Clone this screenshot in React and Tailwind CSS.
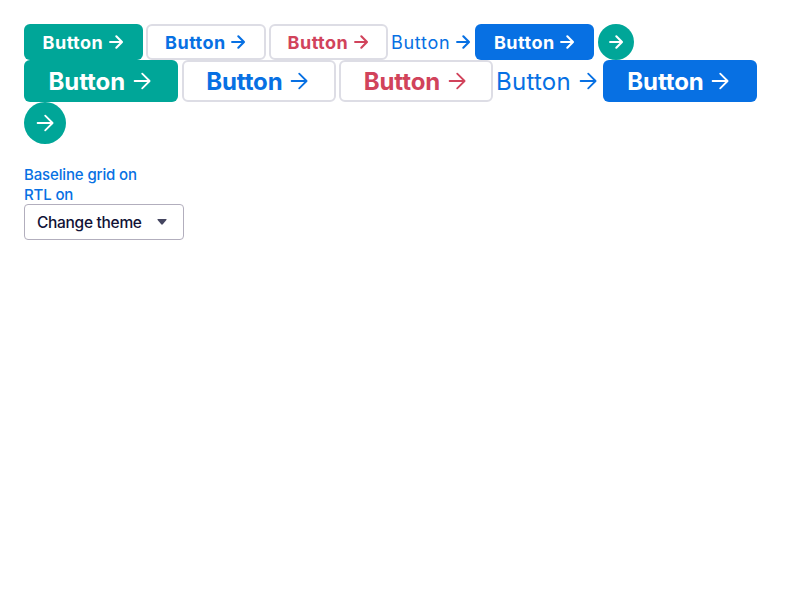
const themes = {
  primary: 'bg-[#00a698] text-white font-bold',
  secondary: 'border-2 border-[#dddde5] bg-white text-[#0770e3] font-bold',
  destructive: 'border-2 border-[#dddde5] bg-white text-[#d1435b] font-bold',
  link: 'text-[#0770e3]',
  featured: 'bg-[#0770e3] text-white font-bold',
};

const kinds = ['primary', 'secondary', 'destructive', 'link', 'featured'];

function Arrow({ large }) {
  return large ? (
    <svg className="size-6 shrink-0" viewBox="0 0 24 24" fill="none" stroke="currentColor" strokeWidth="1.8" strokeLinecap="round" strokeLinejoin="round">
      <path d="M4.6 12H19.4M12.2 4.6L19.6 12L12.2 19.4" />
    </svg>
  ) : (
    <svg className="size-[18px] shrink-0" viewBox="0 0 18 18" fill="none" stroke="currentColor" strokeWidth="2.1" strokeLinecap="round" strokeLinejoin="round">
      <path d="M3.1 9H14.9M9.3 3.3L15 9L9.3 14.7" />
    </svg>
  );
}

function Button({ kind, large }) {
  const isLink = kind === 'link';
  const size = large
    ? `h-[42px] rounded-md text-2xl ${isLink ? 'w-[102.6px]' : 'w-[154.2px]'}`
    : `h-9 rounded-md text-lg ${isLink ? 'w-[80.5px]' : 'w-[119.1px]'}`;
  const label = large
    ? `pt-0.5 ${isLink ? 'w-[77px] tracking-[0.25px]' : 'w-[78px] tracking-[-0.1px]'}`
    : `pt-px ${isLink ? 'w-[60.5px] tracking-[0.75px]' : 'w-[61px] tracking-[0.5px]'}`;
  return (
    <button className={`flex shrink-0 items-center justify-center ${size} ${themes[kind]}`}>
      <span className={`shrink-0 text-left whitespace-nowrap ${label}`}>Button</span>
      <span className="ml-[3px]"><Arrow large={large} /></span>
    </button>
  );
}

function RoundButton({ large }) {
  return (
    <button aria-label="Continue" className={`flex shrink-0 items-center justify-center rounded-full bg-[#00a698] text-white ${large ? 'size-[42px]' : 'size-9'}`}>
      <Arrow large={large} />
    </button>
  );
}

export default function App() {
  return (
    <main className="min-h-[600px] bg-white p-6 font-['Inter',sans-serif]">
      <div className="flex gap-[3.4px]">
        {kinds.map((kind) => <Button key={kind} kind={kind} />)}
        <RoundButton />
      </div>
      <div className="flex flex-wrap gap-x-[3.4px]">
        {kinds.map((kind) => <Button key={kind} kind={kind} large />)}
        <RoundButton large />
      </div>
      <div className="mt-5 flex flex-col items-start text-[15px] font-medium tracking-[-0.14px] text-[#0770e3]">
        <button className="h-5 pt-0.5 leading-[18px]">Baseline grid on</button>
        <button className="h-5 pt-0.5 leading-[18px]">RTL on</button>
      </div>
      <button className="flex h-9 w-40 items-center justify-between rounded border border-[#b2aebd] bg-white pr-4 pl-3 text-[15.5px] font-medium tracking-[-0.3px] text-[#111236]">
        <span className="pt-0.5 whitespace-nowrap">Change theme</span>
        <svg className="h-1.5 w-2.5" viewBox="0 0 10 6" fill="#444560">
          <path d="M1 0H9Q10 0.2 9.4 1.1L6 5.1Q5 6.2 4 5.1L0.6 1.1Q0 0.2 1 0Z" />
        </svg>
      </button>
    </main>
  );
}
